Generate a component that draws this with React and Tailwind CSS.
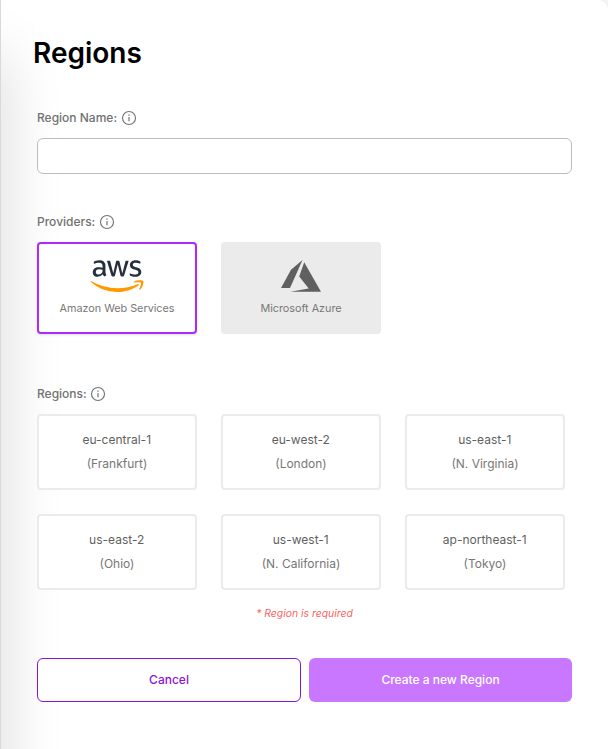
import React from "react";
import { FaAws } from "react-icons/fa";

const regions = [
  ["eu-central-1", "(Frankfurt)"],
  ["eu-west-2", "(London)"],
  ["us-east-1", "(N. Virginia)"],
  ["us-east-2", "(Ohio)"],
  ["us-west-1", "(N. California)"],
  ["ap-northeast-1", "(Tokyo)"],
];

function Label({ children }) {
  return (
    <div className="flex h-4 items-center gap-[3.6px] text-xs font-medium leading-4 text-[#717171]">
      <span>{children}</span>
      <svg className="h-4 w-4" viewBox="0 0 16 16" fill="none" stroke="#747474">
        <circle cx="8" cy="8" r="6.5" strokeWidth="1.15" />
        <path d="M8 7v4.2" strokeWidth="1.2" />
        <path d="M8 4.5v1.3" strokeWidth="1.3" />
      </svg>
    </div>
  );
}

function AwsLogo() {
  return (
    <div className="flex h-8 items-center justify-center">
      <svg className="h-0 w-0">
        <defs>
          <linearGradient id="awsFill" x1="0" y1="0" x2="0" y2="1">
            <stop offset="0.58" stopColor="#252f3e" />
            <stop offset="0.58" stopColor="#ff9900" />
          </linearGradient>
        </defs>
      </svg>
      <FaAws className="h-[42.4px] w-[54px] shrink-0" fill="url(#awsFill)" />
    </div>
  );
}

function AzureLogo() {
  return (
    <svg className="mx-auto h-8 w-10" viewBox="0 0 40 32" fill="#606060">
      <path d="M21.5 0 10 9.8 0 28h9z" />
      <path d="M23.2 2.3 18.2 16.5l9.5 12L9.5 31.7H40z" />
    </svg>
  );
}

export default function App() {
  return (
    <div className="h-[749px] w-[608px] bg-[#f3f3f3] font-['Inter',sans-serif]">
      <main className="relative h-full overflow-hidden rounded-tr-[10px] border-l border-[#d9d9d9] bg-white pl-9 pr-9 pt-[35px]">
        <div className="pointer-events-none absolute -left-10 top-[56px] h-[800px] w-10 shadow-[0_0_60px_rgba(0,0,0,0.18)]" />
        <div className="relative">
          <h1 className="-ml-1 h-9 text-[28px] font-semibold leading-9 text-black">Regions</h1>

          <div className="mt-[39px]">
            <Label>Region Name:</Label>
            <input className="mt-3 block h-9 w-full rounded-md border border-[#bdbdbd] bg-white px-3 text-sm outline-none" />
          </div>

          <div className="mt-10">
            <Label>Providers:</Label>
            <div className="mt-3 flex gap-6">
              <button className="flex h-[92px] w-40 flex-col items-center rounded border-2 border-[#a92bff] bg-white pt-4 text-[10.8px] leading-4 text-[#777] shadow-sm">
                <AwsLogo />
                <span className="mt-[9px] block">Amazon Web Services</span>
              </button>
              <button className="flex h-[92px] w-40 flex-col items-center rounded bg-[#ebebeb] pt-[18px] text-[10.8px] leading-4 text-[#777]">
                <AzureLogo />
                <span className="mt-[9px] block">Microsoft Azure</span>
              </button>
            </div>
          </div>

          <div className="mt-[52px]">
            <Label>Regions:</Label>
            <div className="mt-3 grid grid-cols-[160px_160px_160px] gap-6">
              {regions.map(([id, place]) => (
                <button key={id} className="flex h-19 flex-col items-center justify-center rounded border-2 border-[#ebebeb] bg-white text-xs leading-6">
                  <span className="pr-[0.5px] text-[#5f5f5f]">{id}</span>
                  <span className="text-[#777]">{place}</span>
                </button>
              ))}
            </div>
            <p className="mt-4 text-center text-[10.4px] italic leading-4 text-[#fb6464]">* Region is required</p>
          </div>

          <div className="mt-9 flex gap-2">
            <button className="h-11 w-[264px] rounded-md border border-[#8c13d5] bg-white text-xs font-medium text-[#8c13d5]">Cancel</button>
            <button className="h-11 flex-1 rounded-md bg-[#ca77ff] text-xs font-medium text-white">Create a new Region</button>
          </div>
        </div>
      </main>
    </div>
  );
}
